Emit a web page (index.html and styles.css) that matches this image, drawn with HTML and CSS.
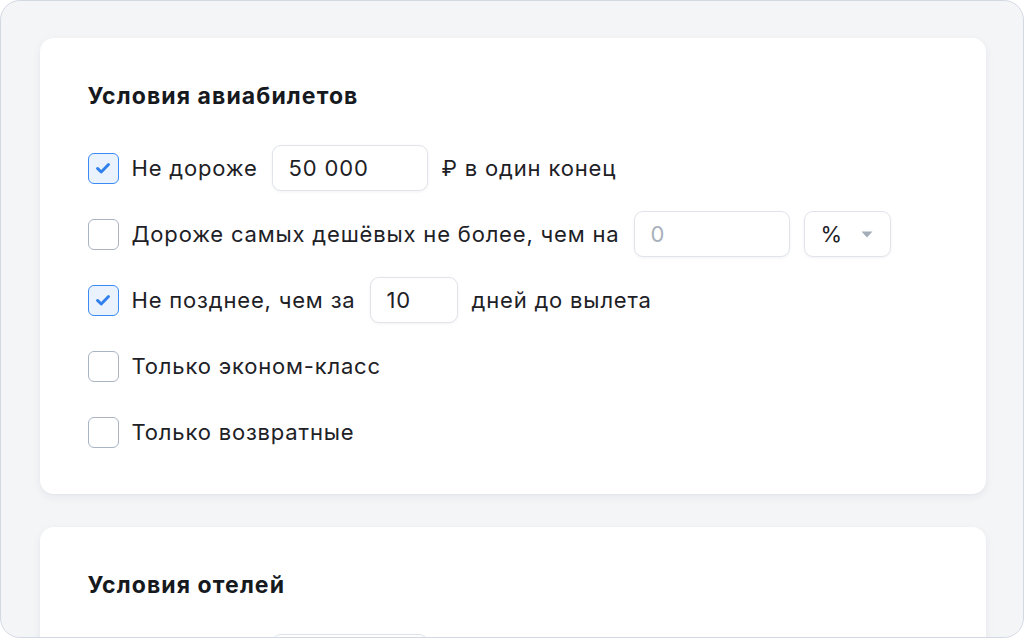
FILE: index.html
```html
<!DOCTYPE html>
<html lang="ru">
<head>
<meta charset="utf-8">
<title>Условия поездок</title>
<link rel="stylesheet" href="styles.css">
</head>
<body>
<div class="frame">
  <section class="card">
    <h2 class="card-title">Условия авиабилетов</h2>
    <div class="rows">
      <div class="row">
        <span class="check is-on"><svg viewBox="0 0 16 16"><path d="M4 8.3l2.7 2.6L12 5.4"/></svg></span>
        <span class="label">Не дороже</span>
        <span class="field w-155">50 000</span>
        <span class="label">₽ в один конец</span>
      </div>
      <div class="row">
        <span class="check"></span>
        <span class="label">Дороже самых дешёвых не более, чем на</span>
        <span class="field w-155 is-empty">0</span>
        <span class="field select">%<svg class="caret" viewBox="0 0 12 7"><path d="M0.5 0.5h11L6 6.5z"/></svg></span>
      </div>
      <div class="row">
        <span class="check is-on"><svg viewBox="0 0 16 16"><path d="M4 8.3l2.7 2.6L12 5.4"/></svg></span>
        <span class="label">Не позднее, чем за</span>
        <span class="field w-87">10</span>
        <span class="label">дней до вылета</span>
      </div>
      <div class="row">
        <span class="check"></span>
        <span class="label">Только эконом-класс</span>
      </div>
      <div class="row">
        <span class="check"></span>
        <span class="label">Только возвратные</span>
      </div>
    </div>
  </section>
  <section class="card">
    <h2 class="card-title">Условия отелей</h2>
    <div class="rows">
      <div class="row">
        <span class="check is-on"><svg viewBox="0 0 16 16"><path d="M4 8.3l2.7 2.6L12 5.4"/></svg></span>
        <span class="label">Не дороже</span>
        <span class="field w-155">8 000</span>
        <span class="label">₽ за ночь</span>
      </div>
    </div>
  </section>
</div>
</body>
</html>
```
FILE: styles.css
```css
* { box-sizing: border-box; }

html, body {
  margin: 0;
  padding: 0;
  background: #ffffff;
}

body {
  font-family: Inter, "Noto Sans", "Liberation Sans", sans-serif;
  color: #1d2126;
}

.frame {
  width: 1024px;
  height: 638px;
  overflow: hidden;
  background: #f4f5f7;
  border: 1.5px solid #d3d9e3;
  border-radius: 20px;
  padding: 37px 37px 0 38.5px;
  display: flex;
  flex-direction: column;
  gap: 33px;
}

.card {
  flex: none;
  background: #ffffff;
  border-radius: 14px;
  box-shadow: 0 3px 10px rgba(30, 40, 60, 0.06), 0 1px 2px rgba(30, 40, 60, 0.03);
  padding: 46px 48px 39px;
}

.card-title {
  margin: 0 0 37px;
  font-size: 23px;
  line-height: 24px;
  font-weight: 700;
  letter-spacing: 1.1px;
  color: #16191d;
}

.rows {
  display: flex;
  flex-direction: column;
  gap: 20px;
}

.row {
  display: flex;
  align-items: center;
  gap: 14px;
  height: 46px;
  font-size: 22px;
  letter-spacing: 0.82px;
}

.label {
  white-space: nowrap;
}

.check {
  flex: none;
  width: 31px;
  height: 31px;
  margin-right: -1px;
  border: 1.5px solid #a9b3c2;
  border-radius: 6px;
  display: flex;
  align-items: center;
  justify-content: center;
  background: #ffffff;
}

.check.is-on {
  border-color: #3a8bf4;
  background: #eaf2fe;
}

.check svg {
  width: 22px;
  height: 22px;
  fill: none;
  stroke: #2f80ed;
  stroke-width: 2.1;
  stroke-linecap: round;
  stroke-linejoin: round;
}

.field {
  flex: none;
  height: 46px;
  display: flex;
  align-items: center;
  padding: 0 16px;
  border: 1px solid #e0e4ea;
  border-radius: 9px;
  background: #ffffff;
  box-shadow: 0 1px 3px rgba(30, 40, 60, 0.06);
}

.w-155 { width: 156px; }
.w-87 { width: 88px; }

.field.is-empty {
  color: #a8b1bc;
}

.field.select {
  width: 87px;
  justify-content: space-between;
  padding-right: 17px;
}

.caret {
  width: 12px;
  height: 7px;
  fill: #a3adb8;
}
```
